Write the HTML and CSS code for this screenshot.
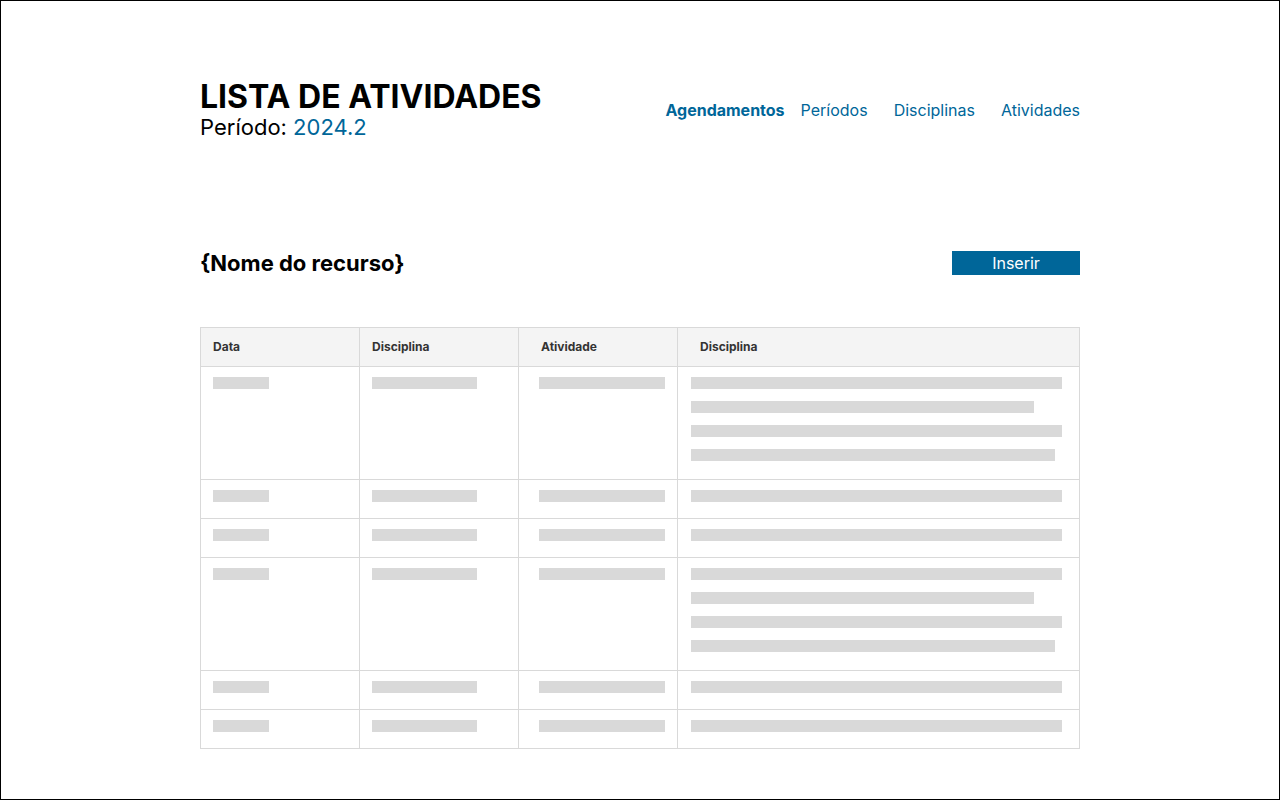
FILE: index.html
```html
<!DOCTYPE html>
<html lang="pt-BR">
<head>
<meta charset="utf-8">
<title>Lista de Atividades</title>
<link rel="stylesheet" href="styles.css">
</head>
<body>
<div class="frame">
  <div class="container">
    <header class="page-header">
      <div class="titles">
        <h1 class="title">LISTA DE ATIVIDADES</h1>
        <p class="period">Período: <span class="period-value">2024.2</span></p>
      </div>
      <nav class="nav">
        <a class="nav-link active" href="#">Agendamentos</a>
        <a class="nav-link" href="#">Períodos</a>
        <a class="nav-link" href="#">Disciplinas</a>
        <a class="nav-link" href="#">Atividades</a>
      </nav>
    </header>

    <div class="toolbar">
      <h2 class="resource">{Nome do recurso}</h2>
      <button class="btn-insert" type="button">Inserir</button>
    </div>

    <table class="grid">
      <colgroup>
        <col class="c1"><col class="c2"><col class="c3"><col class="c4">
      </colgroup>
      <thead>
        <tr>
          <th class="p-a">Data</th>
          <th class="p-a">Disciplina</th>
          <th class="p-b">Atividade</th>
          <th class="p-b">Disciplina</th>
        </tr>
      </thead>
      <tbody>
        <tr class="multi">
          <td class="d1"><span class="bar w1"></span></td>
          <td class="d2"><span class="bar w2"></span></td>
          <td class="d3"><span class="bar w3"></span></td>
          <td class="d4"><span class="bar wa"></span><span class="bar wb"></span><span class="bar wa"></span><span class="bar wc"></span></td>
        </tr>
        <tr>
          <td class="d1"><span class="bar w1"></span></td>
          <td class="d2"><span class="bar w2"></span></td>
          <td class="d3"><span class="bar w3"></span></td>
          <td class="d4"><span class="bar wa"></span></td>
        </tr>
        <tr>
          <td class="d1"><span class="bar w1"></span></td>
          <td class="d2"><span class="bar w2"></span></td>
          <td class="d3"><span class="bar w3"></span></td>
          <td class="d4"><span class="bar wa"></span></td>
        </tr>
        <tr class="multi">
          <td class="d1"><span class="bar w1"></span></td>
          <td class="d2"><span class="bar w2"></span></td>
          <td class="d3"><span class="bar w3"></span></td>
          <td class="d4"><span class="bar wa"></span><span class="bar wb"></span><span class="bar wa"></span><span class="bar wc"></span></td>
        </tr>
        <tr>
          <td class="d1"><span class="bar w1"></span></td>
          <td class="d2"><span class="bar w2"></span></td>
          <td class="d3"><span class="bar w3"></span></td>
          <td class="d4"><span class="bar wa"></span></td>
        </tr>
        <tr>
          <td class="d1"><span class="bar w1"></span></td>
          <td class="d2"><span class="bar w2"></span></td>
          <td class="d3"><span class="bar w3"></span></td>
          <td class="d4"><span class="bar wa"></span></td>
        </tr>
      </tbody>
    </table>
  </div>
</div>
</body>
</html>
```

FILE: styles.css
```css
* { box-sizing: border-box; }

html, body {
  margin: 0;
  padding: 0;
  background: #fff;
}

body {
  font-family: Inter, "Noto Sans", sans-serif;
  color: #000;
}

.frame {
  width: 1280px;
  height: 800px;
  border: 1px solid #000;
  overflow: hidden;
}

.container {
  width: 880px;
  margin: 0 auto;
}

.page-header {
  display: flex;
  justify-content: space-between;
  align-items: center;
  padding-top: 80px;
}

.title {
  margin: 0;
  font-size: 32px;
  line-height: 32px;
  font-weight: 700;
  letter-spacing: 0;
}

.period {
  margin: 2px 0 0;
  font-size: 22px;
  line-height: 24px;
  font-weight: 400;
}

.period-value { color: #006699; }

.nav {
  display: flex;
  align-items: center;
  gap: 26px;
}

.nav-link {
  font-size: 16px;
  line-height: 19px;
  color: #006699;
  text-decoration: none;
}

.nav-link.active {
  font-weight: 700;
  margin-right: -10px;
}

.toolbar {
  display: flex;
  justify-content: space-between;
  align-items: center;
  margin-top: 112px;
  height: 24px;
}

.resource {
  margin: 0;
  font-size: 22px;
  line-height: 24px;
  font-weight: 700;
}

.btn-insert {
  width: 128px;
  height: 24px;
  border: 0;
  padding: 0;
  background: #006699;
  color: #fff;
  font-family: Inter, "Noto Sans", sans-serif;
  font-size: 16px;
  line-height: 24px;
}

.grid {
  margin-top: 52px;
  width: 880px;
  border-collapse: collapse;
  table-layout: fixed;
  border: 1px solid #d9d9d9;
}

.c1, .c2, .c3 { width: 159px; }

.grid th,
.grid td {
  border: 1px solid #d9d9d9;
}

.grid th {
  height: 39px;
  background: #f4f4f4;
  text-align: left;
  font-size: 12px;
  line-height: 16px;
  font-weight: 700;
  color: #333;
  vertical-align: middle;
  padding: 0;
}

.grid th.p-a { padding-left: 12px; }
.grid th.p-b { padding-left: 22px; }

.grid td {
  vertical-align: top;
  padding: 10px 0 16px;
}

.grid tr.multi td { padding-bottom: 18px; }

.grid td.d1 { padding-left: 12px; }
.grid td.d2 { padding-left: 12px; }
.grid td.d3 { padding-left: 20px; }
.grid td.d4 { padding-left: 13px; }

.bar {
  display: block;
  height: 12px;
  background: #d9d9d9;
  margin-bottom: 12px;
}

.bar:last-child { margin-bottom: 0; }

.w1 { width: 56px; }
.w2 { width: 105px; }
.w3 { width: 126px; }
.wa { width: 371px; }
.wb { width: 343px; }
.wc { width: 364px; }
```
